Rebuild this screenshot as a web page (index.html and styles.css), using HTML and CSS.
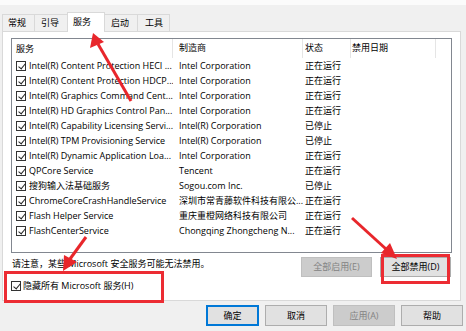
FILE: index.html
```html
<!DOCTYPE html>
<html lang="zh-CN">
<head>
<meta charset="utf-8">
<link rel="stylesheet" href="styles.css">
</head>
<body>
<div class="topstrip"></div>
<div class="dialog">
  <div class="tabs">
    <div class="tab t1">常规</div>
    <div class="tab t2">引导</div>
    <div class="tab active">服务</div>
    <div class="tab t4">启动</div>
    <div class="tab t5">工具</div>
  </div>
  <div class="panel">
    <div class="list">
      <div class="row head">
        <div class="c1">服务</div>
        <div class="c2">制造商</div>
        <div class="c3">状态</div>
        <div class="c4">禁用日期</div>
        <div class="c5"></div>
      </div>
      <div class="row"><div class="c1"><span class="cb"></span>Intel(R) Content Protection HECI ...</div><div class="c2">Intel Corporation</div><div class="c3">正在运行</div></div>
      <div class="row"><div class="c1"><span class="cb"></span>Intel(R) Content Protection HDCP...</div><div class="c2">Intel Corporation</div><div class="c3">正在运行</div></div>
      <div class="row"><div class="c1"><span class="cb"></span>Intel(R) Graphics Command Cent...</div><div class="c2">Intel Corporation</div><div class="c3">正在运行</div></div>
      <div class="row"><div class="c1"><span class="cb"></span>Intel(R) HD Graphics Control Pan...</div><div class="c2">Intel Corporation</div><div class="c3">正在运行</div></div>
      <div class="row"><div class="c1"><span class="cb"></span>Intel(R) Capability Licensing Servi...</div><div class="c2">Intel(R) Corporation</div><div class="c3">已停止</div></div>
      <div class="row"><div class="c1"><span class="cb"></span>Intel(R) TPM Provisioning Service</div><div class="c2">Intel(R) Corporation</div><div class="c3">已停止</div></div>
      <div class="row"><div class="c1"><span class="cb"></span>Intel(R) Dynamic Application Loa...</div><div class="c2">Intel Corporation</div><div class="c3">正在运行</div></div>
      <div class="row"><div class="c1"><span class="cb"></span>QPCore Service</div><div class="c2">Tencent</div><div class="c3">正在运行</div></div>
      <div class="row"><div class="c1"><span class="cb"></span>搜狗输入法基础服务</div><div class="c2">Sogou.com Inc.</div><div class="c3">已停止</div></div>
      <div class="row"><div class="c1"><span class="cb"></span>ChromeCoreCrashHandleService</div><div class="c2">深圳市常青藤软件科技有限公...</div><div class="c3">正在运行</div></div>
      <div class="row"><div class="c1"><span class="cb"></span>Flash Helper Service</div><div class="c2">重庆重橙网络科技有限公司</div><div class="c3">正在运行</div></div>
      <div class="row"><div class="c1"><span class="cb"></span>FlashCenterService</div><div class="c2">Chongqing Zhongcheng N...</div><div class="c3">正在运行</div></div>
    </div>
    <div class="below">
      <div class="left">
        <div class="note">请注意，某些 Microsoft 安全服务可能无法禁用。</div>
        <label class="hide"><span class="cb"></span>隐藏所有 Microsoft 服务(H)</label>
      </div>
      <div class="right">
        <button class="btn disabled">全部启用(E)</button>
        <button class="btn">全部禁用(D)</button>
      </div>
    </div>
  </div>
  <div class="actions">
    <button class="btn default">确定</button>
    <button class="btn">取消</button>
    <button class="btn disabled">应用(A)</button>
    <button class="btn">帮助</button>
  </div>
</div>
<div class="mark mark-hide"></div>
<div class="mark mark-disable"></div>
<svg class="arrows" width="466" height="331" viewBox="0 0 466 331">
  <g fill="#e8262b" stroke="#e8262b">
    <line x1="131" y1="101" x2="98" y2="44" stroke-width="3"/>
    <polygon points="93,33 90,48 104,42" stroke="none"/>
    <line x1="86" y1="237" x2="70" y2="259" stroke-width="3"/>
    <polygon points="63,271 64,255 77,262" stroke="none"/>
    <line x1="352" y1="218" x2="386" y2="249" stroke-width="3"/>
    <polygon points="397,259 381,253 390,243" stroke="none"/>
  </g>
</svg>
</body>
</html>
```

FILE: styles.css
```css
* { box-sizing: border-box; }
html, body { margin: 0; padding: 0; }
body {
  width: 466px;
  height: 331px;
  overflow: hidden;
  background: #f0f0f0;
  font-family: "Open Sans", "Noto Sans CJK SC", sans-serif;
  font-size: 9px;
  color: #000;
  position: relative;
}
.topstrip { height: 5px; background: #fbfbfb; }
.dialog { padding: 7px 0 0 2px; }
.tabs { display: flex; align-items: flex-end; height: 19px; position: relative; z-index: 1; }
.tab {
  height: 17px;
  padding-left: 5px;
  border: 1px solid #d9d9d9;
  border-bottom: none;
  margin-right: -1px;
  background: #f0f0f0;
  line-height: 16px;
  white-space: nowrap;
}
.t1 { width: 33px; }
.t2 { width: 34px; padding-left: 6px; }
.t4 { width: 34px; padding-left: 6px; }
.t5 { width: 33px; padding-left: 7px; }
.tab.active {
  width: 38px;
  height: 20px;
  background: #fff;
  margin-bottom: -1px;
  padding-left: 5px;
  line-height: 17px;
}
.panel {
  width: 459px;
  height: 270px;
  background: #fff;
  border: 1px solid #d9d9d9;
  padding: 6px 0 0 8px;
}
.list {
  width: 441px;
  height: 215px;
  border: 1px solid #828790;
  overflow: hidden;
}
.row { display: flex; height: 15px; line-height: 15px; white-space: nowrap; }
.row.head { height: 19px; line-height: 18px; }
.row > div { overflow: hidden; }
.c1 { width: 161px; padding-left: 4px; display: flex; align-items: center; }
.c2 { width: 130px; padding-left: 6px; }
.c3 { width: 48px; padding-left: 2px; }
.c4 { width: 85px; padding-left: 1px; }
.c5 { flex: 1; }
.head > div { border-right: 1px solid #e5e5e5; }
.head .c5 { border-right: none; }
.cb {
  width: 10px;
  height: 10px;
  border: 1px solid #333;
  background: #fff;
  margin-right: 3px;
  flex: none;
  position: relative;
  display: inline-block;
}
.cb::after {
  content: "";
  position: absolute;
  left: 2.5px;
  top: 0px;
  width: 3px;
  height: 6px;
  border: solid #222;
  border-width: 0 1px 1px 0;
  transform: rotate(40deg);
}
.below { display: flex; justify-content: space-between; padding-right: 9px; }
.left { padding-left: 1px; }
.note { margin-top: 3px; line-height: 15px; }
.hide { display: flex; align-items: center; margin-top: 7px; margin-left: -1px; line-height: 15px; }
.hide .cb { margin-right: 2px; }
.right { display: flex; gap: 8px; padding-top: 4px; }
.btn {
  font: inherit;
  height: 21px;
  padding: 0;
  background: #e1e1e1;
  border: 1px solid #adadad;
  color: #000;
  line-height: 18px;
}
.right .btn { width: 71px; height: 20px; }
.btn.disabled { background: #cccccc; border-color: #bfbfbf; color: #838383; }
.btn.default { border: 2px solid #0078d7; }
.actions { display: flex; justify-content: flex-end; gap: 6px; padding: 4px 3px 0 0; }
.actions .btn { width: 62px; }
.actions .btn.default { width: 53px; }
.mark { position: absolute; border: 3px solid #ec2c33; }
.mark-hide { left: 4px; top: 271px; width: 160px; height: 32px; }
.mark-disable { left: 381px; top: 254px; width: 69px; height: 30px; }
.arrows { position: absolute; left: 0; top: 0; pointer-events: none; }
```
